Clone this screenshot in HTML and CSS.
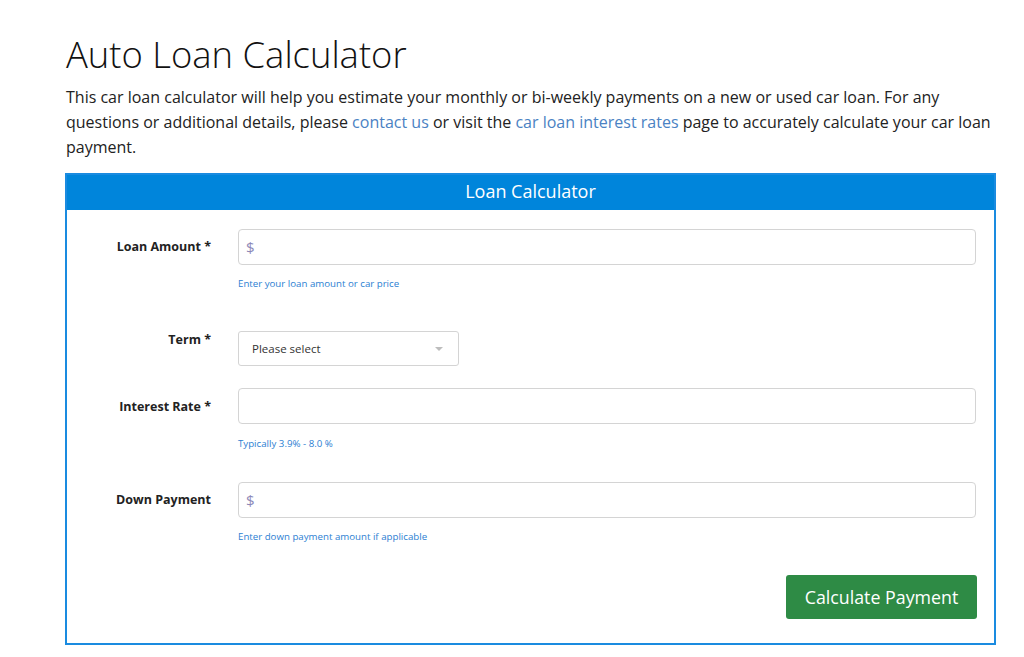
FILE: index.html
```html
<!DOCTYPE html>
<html lang="en">
<head>
<meta charset="utf-8">
<title>Auto Loan Calculator</title>
<link rel="stylesheet" href="styles.css">
</head>
<body>
<main class="page">
  <h1 class="title">Auto Loan Calculator</h1>
  <p class="intro">This car loan calculator will help you estimate your monthly or bi-weekly payments on a new or used car loan. For any questions or additional details, please <a href="#" class="link">contact us</a> or visit the <a href="#" class="link">car loan interest rates</a> page to accurately calculate your car loan payment.</p>

  <section class="calc">
    <header class="calc-head">Loan Calculator</header>
    <form class="calc-body">
      <div class="field field-amount">
        <label class="label">Loan Amount *</label>
        <div class="control">
          <input class="input" type="text" placeholder="$">
          <div class="help">Enter your loan amount or car price</div>
        </div>
      </div>
      <div class="field field-term">
        <label class="label label-term">Term *</label>
        <div class="control">
          <div class="select">
            <span class="select-text">Please select</span>
            <span class="caret"></span>
          </div>
        </div>
      </div>
      <div class="field field-rate">
        <label class="label">Interest Rate *</label>
        <div class="control">
          <input class="input" type="text">
          <div class="help">Typically 3.9% - 8.0 %</div>
        </div>
      </div>
      <div class="field field-down">
        <label class="label">Down Payment</label>
        <div class="control">
          <input class="input" type="text" placeholder="$">
          <div class="help">Enter down payment amount if applicable</div>
        </div>
      </div>
      <div class="actions">
        <button type="button" class="btn">Calculate Payment</button>
      </div>
    </form>
  </section>
</main>
</body>
</html>
```

FILE: styles.css
```css
* { box-sizing: border-box; }
html, body { margin: 0; padding: 0; background: #fff; }
body {
  font-family: "Open Sans", "Noto Sans", sans-serif;
  color: #222;
}
.page {
  width: 931px;
  margin-left: 65px;
  padding-top: 32px;
}
.title {
  margin: 0;
  font-size: 36.4px;
  line-height: 44px;
  font-weight: 300;
  color: #111;
  padding-left: 1px;
}
.intro {
  margin: 9px 0 13px 0;
  font-size: 16px;
  line-height: 25px;
  color: #222;
  padding-left: 1px;
}
.link { color: #4a82c3; text-decoration: none; }

.calc {
  border: 2px solid #1a8be0;
}
.calc-head {
  background: #0085db;
  color: #fff;
  text-align: center;
  font-size: 18px;
  height: 35px;
  line-height: 33px;
}
.calc-body {
  padding: 19px 18px 24px 0;
  margin: 0;
}
.field {
  display: grid;
  grid-template-columns: 144px 1fr;
  column-gap: 27px;
}
.field-amount { margin-bottom: 40px; }
.field-term { margin-bottom: 22px; }
.field-rate { margin-bottom: 31px; }
.field-down { margin-bottom: 31px; }
.label {
  text-align: right;
  font-size: 12.5px;
  font-weight: 700;
  line-height: 18px;
  padding-top: 9px;
  color: #222;
}
.field-rate .label { padding-top: 10px; }
.label-term { padding-top: 0; margin-top: 0; }
.input {
  display: block;
  width: 100%;
  height: 36px;
  border: 1px solid #d4d4d4;
  border-radius: 4px;
  padding: 0 7px;
  font-family: "Open Sans", sans-serif;
  font-size: 15px;
  outline: none;
}
.input::placeholder { color: #8c88b8; }
.help {
  margin-top: 12px;
  font-size: 9.7px;
  line-height: 14px;
  color: #2c80d2;
}
.field-rate .help { margin-top: 13px; }
.select {
  width: 221px;
  height: 35px;
  border: 1px solid #d4d4d4;
  border-radius: 3px;
  display: flex;
  align-items: center;
  justify-content: space-between;
  padding: 0 15px 0 13px;
}
.select-text { font-size: 11.5px; color: #333; }
.caret {
  width: 0; height: 0;
  border-left: 4px solid transparent;
  border-right: 4px solid transparent;
  border-top: 4px solid #bdbdbd;
}
.actions {
  display: flex;
  justify-content: flex-end;
  margin-right: -1px;
}
.btn {
  width: 191px;
  height: 44px;
  background: #2e8b45;
  color: #fff;
  border: none;
  border-radius: 3px;
  font-family: "Open Sans", sans-serif;
  font-size: 17.8px;
  padding: 0;
}
```
